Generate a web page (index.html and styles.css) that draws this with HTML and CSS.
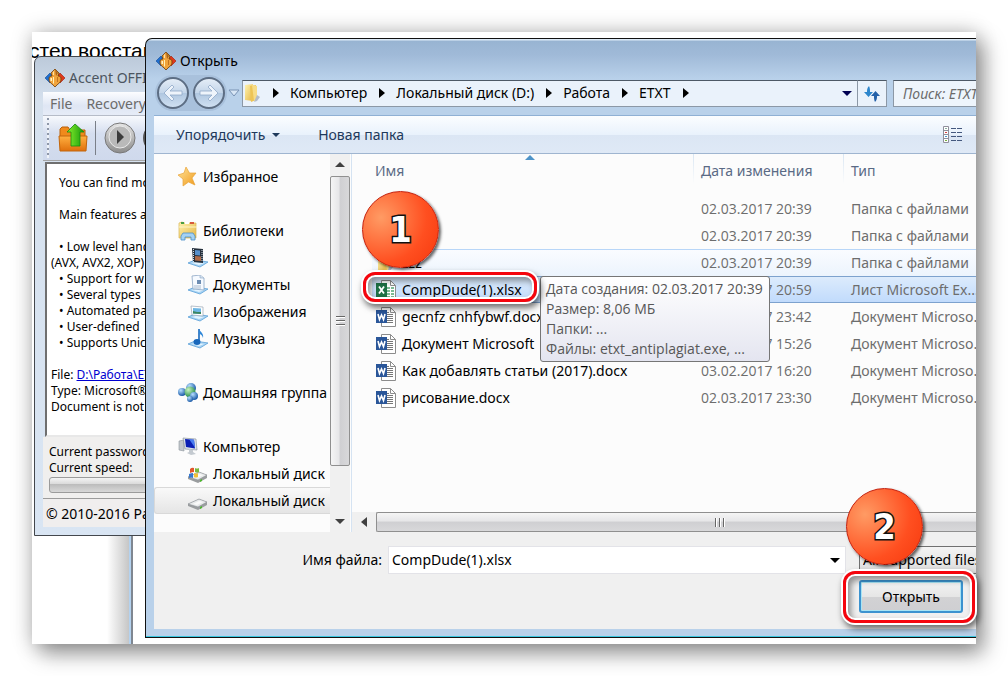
FILE: index.html
```html
<!DOCTYPE html>
<html lang="ru">
<head>
<meta charset="utf-8">
<title>Открыть</title>
<link rel="stylesheet" href="styles.css">
</head>
<body>
<svg class="sprite" aria-hidden="true">
  <defs>
    <linearGradient id="gold" x1="0" y1="0" x2="1" y2="1"><stop offset="0" stop-color="#fff3b0"/><stop offset="1" stop-color="#e5b645"/></linearGradient>
    <linearGradient id="orange" x1="0" y1="0" x2="0" y2="1"><stop offset="0" stop-color="#ffb040"/><stop offset="1" stop-color="#e0700c"/></linearGradient>
    <linearGradient id="green" x1="0" y1="0" x2="1" y2="0"><stop offset="0" stop-color="#8af02c"/><stop offset="1" stop-color="#159a0c"/></linearGradient>
    <linearGradient id="steel" x1="0" y1="0" x2="0" y2="1"><stop offset="0" stop-color="#e6e6e6"/><stop offset="1" stop-color="#8c8c8c"/></linearGradient>
    <linearGradient id="starfill" x1="0" y1="0" x2="1" y2="1"><stop offset="0" stop-color="#ffe49a"/><stop offset="1" stop-color="#f09a1c"/></linearGradient>
    <radialGradient id="globe" cx=".35" cy=".3" r=".7"><stop offset="0" stop-color="#b8e0ff"/><stop offset="1" stop-color="#1c5ba8"/></radialGradient>
    <radialGradient id="globe2" cx=".35" cy=".3" r=".7"><stop offset="0" stop-color="#c8f5c0"/><stop offset="1" stop-color="#238a4a"/></radialGradient>
    <symbol id="app" viewBox="0 0 20 20">
      <path d="M5 5 0 10l5 5 4-5z" fill="#1f6fd0" stroke="#124a94" stroke-width=".6"/><path d="M15 5l5 5-5 5-4-5z" fill="#e03a1c" stroke="#9c1c0c" stroke-width=".6"/>
      <path d="M10 1l4 4-1 3c2 0 3 1 3 3s-1 4-3 5l-3 3-3-3c-2-1-3-3-3-5s1-3 3-3L6 5z" fill="#f0a43c" stroke="#6e3c08" stroke-width=".8"/>
      <path d="M10 1l3 4-2 3z" fill="#a8641c"/><path d="M8 4l1-1v4l-1 0z" fill="#fbe0a8"/><path d="M8 9h1v7l-1-1z" fill="#fff0b8"/><path d="M5.500 10h1.500v3H5.500z" fill="#fff2c4"/><path d="M12 9h1v5h-1z" fill="#c27420"/>
    </symbol>
    <symbol id="folder" viewBox="0 0 20 20">
      <path d="M2 2l8-1v17l-8-1z" fill="url(#gold)"/><path d="M7 3l6-1v15l-5 2z" fill="#edc455"/><path d="M9 2l5 1v13l-3 2z" fill="#f7dc86"/><path d="M14 12l3 2-3 4-3 1z" fill="#b3bcc9"/>
    </symbol>
    <symbol id="star" viewBox="0 0 20 20"><path d="M8 0l3.500 6 6.500 0-4 5 3 7-6.500-3L5 19l0-7-5-4 6-2z" fill="url(#starfill)" stroke="#e8a53a" stroke-width=".7"/></symbol>
    <symbol id="library" viewBox="0 0 20 20">
      <path d="M1 4V2l3-1 2 1h12v15H1z" fill="url(#gold)" stroke="#d8b455" stroke-width=".7"/><path d="M3 1h3v2H3z" fill="#4a9e42"/><path d="M7 1h4v2H7z" fill="#fff"/><path d="M12 1h4v2h-4z" fill="#d65a3c"/>
      <path d="M1 6h18" stroke="#fff5c8"/><path d="M3 19v-4l2-3h10l2 3v4h-4v-3H7v3z" fill="#a5d2f4" stroke="#4b8fc8" stroke-width=".8"/>
    </symbol>
    <symbol id="tray" viewBox="0 0 20 20"><path d="M0 15l7-3 13 2-8 5z" fill="#a8d4f4" stroke="#5aa0d8" stroke-width=".8"/><path d="M4 15l4-1 8 1-5 2z" fill="#e4f4ff"/></symbol>
    <symbol id="video" viewBox="0 0 20 20"><use href="#tray"/><path d="M4 0l11 1v14L5 14z" fill="#26303c"/><path d="M7 2l5 .5v5L7 7z" fill="#5790cc"/><path d="M7 8l6 .5V13l-6-.5z" fill="#b06a48"/><path d="M5.500 1v13M14 2v12" stroke="#d4dce4" stroke-width="1" stroke-dasharray="1 1"/></symbol>
    <symbol id="docs" viewBox="0 0 20 20"><use href="#tray"/><path d="M4 1l8-1 4 3v12l-11-1z" fill="#f6faff" stroke="#8ca6c4" stroke-width=".8"/><path d="M12 0v3h4" fill="#d5e2f0" stroke="#8ca6c4" stroke-width=".6"/><path d="M9 5h4v4H9z" fill="#6c8cb2"/><path d="M6 11h7M6 13h7" stroke="#a9bbd0"/></symbol>
    <symbol id="pics" viewBox="0 0 20 20"><use href="#tray"/><path d="M3 4l12 1v9L4 13z" fill="#fff" stroke="#99a6b5" stroke-width=".7"/><path d="M5 6l8 .5V12l-8-.5z" fill="#6db6e4"/><path d="M5 9l4 1 4 0v2l-8-.5z" fill="#3b8560"/></symbol>
    <symbol id="music" viewBox="0 0 20 20"><use href="#tray"/><path d="M11 0v12" stroke="#1767bb" stroke-width="1.600"/><path d="M11 0c1 3 5 4 4 9-1-3-2-4-4-4z" fill="#2f87d8"/><ellipse cx="9" cy="13" rx="3.500" ry="3" fill="#1767bb"/></symbol>
    <symbol id="home" viewBox="0 0 20 20"><circle cx="4" cy="9" r="4" fill="url(#globe)"/><circle cx="13" cy="5" r="5" fill="url(#globe)"/><circle cx="12" cy="9" r="5.500" fill="url(#globe2)"/><circle cx="16" cy="13" r="4" fill="url(#globe)"/><circle cx="12" cy="16" r="3" fill="url(#globe)"/></symbol>
    <symbol id="pc" viewBox="0 0 20 20"><path d="M1 4l5-1v11l-5-1z" fill="#c4c8cc" stroke="#8c949c" stroke-width=".6"/><path d="M5 1l13 1 1 11L7 12z" fill="#dde3ea" stroke="#7e8893" stroke-width=".6"/><path d="M7 2l9 .8 1 8.700L8 10z" fill="#0b1fb4"/><path d="M11 2l5 .8 1 8z" fill="#4a7df0"/><path d="M11 12l4 1v2l3 2-5 1-4-2 2-1z" fill="#c4cad0"/></symbol>
    <symbol id="drive" viewBox="0 0 20 20"><path d="M0 13l11-5 8 3v3l-9 5-10-4z" fill="#9a9d9f"/><path d="M0 13l11-5 8 3-9 5z" fill="#e8eaeb" stroke="#8a8f94" stroke-width=".6"/><path d="M5 13l6-3 4 1-6 3z" fill="#fafafa"/><path d="M12 16l2-1v2l-2 1z" fill="#4cb82c"/></symbol>
    <symbol id="sysdrive" viewBox="0 0 20 20"><use href="#drive"/><path d="M2 5q2-2 4-1v4q-2 0-4 1z" fill="#e2572c"/><path d="M7 4q2 1 4 0v4q-2 1-4 0z" fill="#7bb83c"/><path d="M1 10q2-1 4-1v5q-2-1-4 0z" fill="#3878cc"/><path d="M6 9q2 1 4 0v4q-2 1-4 0z" fill="#f0c038"/></symbol>
    <symbol id="word" viewBox="0 0 20 20"><path d="M5.500 .5h9l5 5v14h-14z" fill="#fff" stroke="#8c8c8c" stroke-width="1"/><path d="M14.500 .5v5h5" fill="none" stroke="#8c8c8c"/><path d="M11 7.500h6M11 9.500h6M11 11.500h6M11 13.500h6M11 15.500h6M11 5.500h2" stroke="#777"/><path d="M0 3h11v13H0z" fill="#2a5699"/><path d="M2 7l1.500 5.500L5.500 8l2 4.500L9 7" fill="none" stroke="#fff" stroke-width="1.600"/></symbol>
    <symbol id="excel" viewBox="0 0 20 20"><path d="M5.500 .5h9l5 5v14h-14z" fill="#fff" stroke="#8c8c8c"/><path d="M14.500 .5v5h5" fill="none" stroke="#8c8c8c"/><path d="M11 7h3v2h-3zM15 7h3v2h-3zM11 10h3v2h-3zM15 10h3v2h-3zM11 13h3v2h-3zM15 13h3v2h-3zM11 16h3v2h-3zM15 16h3v2h-3z" fill="#7cba94"/><path d="M0 3h11v14H0z" fill="#1e7145"/><path d="M3 6.500l5 7M8 6.500l-5 7" stroke="#fff" stroke-width="1.800"/></symbol>
  </defs>
</svg>

<main class="desktop">
  <p class="backdrop-title">стер восстан</p>
  <div class="backdrop-panel"></div>

  <section class="app-window" aria-label="Accent OFFICE">
    <header class="app-title"><svg class="icon"><use href="#app"/></svg>Accent OFFICE</header>
    <nav class="app-menu"><button type="button">File</button><button type="button">Recovery</button></nav>
    <div class="app-tools">
      <span class="grip"></span>
      <button type="button" aria-label="Open">
        <svg class="tool-icon" viewBox="0 0 32 32"><path d="M3 7l2-2h6l2 3h15v8H3z" fill="#f08a1c" stroke="#b8600c"/><path d="M2 14h28l-1 15H3z" fill="url(#orange)" stroke="#c2660c"/><path d="M18 2l9 8h-4v14h-9V10h-4z" fill="url(#green)" stroke="#178a10" stroke-width=".8"/></svg>
      </button>
      <span class="tool-line"></span>
      <button type="button" aria-label="Start">
        <svg class="tool-icon" viewBox="0 0 32 32"><circle cx="16" cy="16" r="15" fill="url(#steel)" stroke="#777" stroke-width="1"/><circle cx="16" cy="15" r="11" fill="#b9b9b9" stroke="#e8e8e8"/><path d="M13 8l7 7-7 7z" fill="#3c3c3c"/></svg>
      </button>
      <button type="button" aria-label="Stop">
        <svg class="tool-icon" viewBox="0 0 32 32"><circle cx="16" cy="16" r="15" fill="url(#steel)" stroke="#555" stroke-width="2"/></svg>
      </button>
    </div>
    <div class="app-log">
      <p class="indent">You can find more</p>
      <p class="indent gap">Main features are</p>
      <ul>
        <li>• Low level hand</li>
        <li class="wrapped">(AVX, AVX2, XOP)</li>
        <li>• Support for w</li>
        <li>• Several types</li>
        <li>• Automated pas</li>
        <li>• User-defined</li>
        <li>• Supports Unic</li>
      </ul>
      <p class="gap">File: <a href="#file">D:\Работа\ETXT</a></p>
      <p>Type: Microsoft®</p>
      <p>Document is not</p>
    </div>
    <div class="app-progress">
      <p>Current password:</p>
      <p>Current speed:</p>
      <div class="bar"></div>
    </div>
    <footer class="app-status">© 2010-2016 Pass</footer>
  </section>

  <section class="dialog" role="dialog" aria-labelledby="dialog-title">
    <header class="dialog-title"><svg class="icon"><use href="#app"/></svg><span id="dialog-title">Открыть</span></header>

    <div class="nav-row">
      <div class="history">
        <button type="button" class="round" aria-label="Назад"><svg viewBox="0 0 20 20"><path d="M9 2 1 10l8 8 2-2-4-4h12V8H7l4-4z" fill="#eef4fb" stroke="#8fa8c8" stroke-width=".8"/></svg></button>
        <button type="button" class="round" aria-label="Вперёд"><svg viewBox="0 0 20 20"><path d="M11 2l8 8-8 8-2-2 4-4H1V8h12L9 4z" fill="#eef4fb" stroke="#8fa8c8" stroke-width=".8"/></svg></button>
      </div>
      <button type="button" class="recent" aria-label="Недавние"><svg viewBox="0 0 12 8"><path d="M1 1h10L6 7z" fill="#d8e6f5" stroke="#7892b4"/></svg></button>
      <div class="address">
        <svg class="icon"><use href="#folder"/></svg>
        <span class="arrow"></span><button type="button">Компьютер</button>
        <span class="arrow"></span><button type="button">Локальный диск (D:)</button>
        <span class="arrow"></span><button type="button">Работа</button>
        <span class="arrow"></span><button type="button">ETXT</button>
        <span class="arrow"></span>
        <span class="drop"></span>
      </div>
      <button type="button" class="refresh" aria-label="Обновить"><svg viewBox="0 0 18 18"><path d="M6 1C4 3 4 5 4 7H1l4.500 5L10 7H7c0-2 0-4-1-6z" fill="#2d86cc"/><path d="M12 17c2-2 2-4 2-6h3l-4.500-5L8 11h3c0 2 0 4 1 6z" fill="#2460a8"/></svg></button>
      <input class="search" type="text" placeholder="Поиск: ETXT" aria-label="Поиск">
    </div>

    <div class="command-bar">
      <button type="button">Упорядочить <span class="caret"></span></button>
      <button type="button">Новая папка</button>
      <button type="button" class="view" aria-label="Вид"><svg viewBox="0 0 20 18"><path d="M1.500 .5h5v16h-5zM1.500 4.500h5M1.500 8.500h5M1.500 12.500h5" fill="#fff" stroke="#8f8f9c"/><path d="M3 2.500h2" stroke="#8ab0a0"/><path d="M3 6.500h2" stroke="#d84040"/><path d="M3 10.500h2" stroke="#4898d0"/><path d="M3 14.500h2" stroke="#78b040"/><path d="M9 2.500h5M15 2.500h5M9 6.500h5M15 6.500h5M9 10.500h5M15 10.500h5M9 14.500h5M15 14.500h5" stroke="#44587e"/></svg></button>
    </div>

    <div class="dialog-body">
      <nav class="tree">
        <a href="#fav" class="group"><svg class="icon"><use href="#star"/></svg>Избранное</a>
        <a href="#lib" class="group"><svg class="icon"><use href="#library"/></svg>Библиотеки</a>
        <a href="#video-lib"><svg class="icon"><use href="#video"/></svg>Видео</a>
        <a href="#docs-lib"><svg class="icon"><use href="#docs"/></svg>Документы</a>
        <a href="#pics-lib"><svg class="icon"><use href="#pics"/></svg>Изображения</a>
        <a href="#music-lib"><svg class="icon"><use href="#music"/></svg>Музыка</a>
        <a href="#homegroup" class="group"><svg class="icon"><use href="#home"/></svg>Домашняя группа</a>
        <a href="#computer" class="group"><svg class="icon"><use href="#pc"/></svg>Компьютер</a>
        <a href="#disk-c"><svg class="icon"><use href="#sysdrive"/></svg>Локальный диск</a>
        <a href="#disk-d" class="current"><svg class="icon"><use href="#drive"/></svg>Локальный диск</a>
      </nav>
      <div class="vscroll" aria-hidden="true"><span class="tri up"></span><span class="thumb"><i class="ridges"></i></span><span class="tri down"></span></div>
      <div class="files">
        <table>
          <thead><tr><th scope="col" class="name sorted">Имя</th><th scope="col" class="date">Дата изменения</th><th scope="col">Тип</th></tr></thead>
          <tbody>
            <tr><td></td><td>02.03.2017 20:39</td><td>Папка с файлами</td></tr>
            <tr><td></td><td>02.03.2017 20:39</td><td>Папка с файлами</td></tr>
            <tr class="hover"><td><span class="file"><svg class="icon"><use href="#folder"/></svg>zzz</span></td><td>02.03.2017 20:39</td><td>Папка с файлами</td></tr>
            <tr class="selected"><td><span class="file"><svg class="icon"><use href="#excel"/></svg>CompDude(1).xlsx</span></td><td>02.03.2017 20:59</td><td>Лист Microsoft Ex...</td></tr>
            <tr><td><span class="file"><svg class="icon"><use href="#word"/></svg>gecnfz cnhfybwf.docx</span></td><td>02.03.2017 23:42</td><td>Документ Microso...</td></tr>
            <tr><td><span class="file"><svg class="icon"><use href="#word"/></svg>Документ Microsoft</span></td><td>02.03.2017 15:26</td><td>Документ Microso...</td></tr>
            <tr><td><span class="file"><svg class="icon"><use href="#word"/></svg>Как добавлять статьи (2017).docx</span></td><td>03.02.2017 16:20</td><td>Документ Microso...</td></tr>
            <tr><td><span class="file"><svg class="icon"><use href="#word"/></svg>рисование.docx</span></td><td>02.03.2017 23:30</td><td>Документ Microso...</td></tr>
          </tbody>
        </table>
        <div class="hscroll" aria-hidden="true"><span class="tri left"></span><span class="thumb"><i class="ridges"></i></span></div>
        <div class="tooltip" role="tooltip">Дата создания: 02.03.2017 20:39<br>Размер: 8,06 МБ<br>Папки: ...<br>Файлы: etxt_antiplagiat.exe, ...</div>
      </div>
    </div>

    <form class="dialog-form">
      <label for="filename">Имя файла:</label>
      <div class="combo"><input id="filename" type="text" value="CompDude(1).xlsx"><span class="drop"></span></div>
      <select aria-label="Тип файлов"><option>All supported files</option></select>
      <button type="button" class="open">Открыть</button>
    </form>
  </section>

  <div class="frame frame-file"></div>
  <div class="frame frame-open"></div>
  <div class="marker marker-one"><span>1</span></div>
  <div class="marker marker-two"><span>2</span></div>
</main>
</body>
</html>
```
FILE: styles.css
```css
* { box-sizing: border-box; }

body {
  margin: 0;
  padding: 32px;
  min-height: 100vh;
  display: grid;
  overflow: hidden;
  background: #fff;
  color: #000;
  font: 14px/20px "Noto Sans", "Open Sans", sans-serif;
}

p, ul { margin: 0; padding: 0; list-style: none; }
button, input, select { font: inherit; color: inherit; margin: 0; }
button { padding: 0; border: 0; background: none; }
a { color: inherit; text-decoration: none; }
.sprite { position: absolute; width: 0; height: 0; }
.icon { width: 20px; height: 20px; flex: none; }

.desktop {
  position: relative;
  background: #fff;
  box-shadow: 0 0 20px rgba(0, 0, 0, .24), 8px 10px 20px rgba(0, 0, 0, .36);
}

.backdrop-title {
  position: absolute;
  left: 0;
  top: 7px;
  width: 116px;
  overflow: hidden;
  white-space: nowrap;
  text-indent: -3px;
  font: 21px/24px "Liberation Sans", Arial, sans-serif;
}

.backdrop-panel {
  position: absolute;
  left: 0;
  top: 500px;
  bottom: 0;
  width: 101px;
  border-right: 2px solid #7f8791;
  background: linear-gradient(to left, #b4d2ef 2px, #c6c6c6 2px, #fff 24px);
}

/* Password recovery application behind the dialog */
.app-window {
  position: absolute;
  left: 2px;
  top: 24px;
  width: 200px;
  height: 480px;
  padding: 0 0 8px 8px;
  display: flex;
  flex-direction: column;
  overflow: hidden;
  white-space: nowrap;
  border: 1px solid #43474d;
  border-radius: 7px 0 0 0;
  background: linear-gradient(#bccada, #d6e1ee 44px, #d9e5f3);
  font: 12px/16px "Noto Sans", sans-serif;
}
.app-title {
  height: 35px;
  padding: 7px 2px 0;
  display: flex;
  gap: 4px;
  align-items: center;
  color: #4c5560;
  font: 14px/20px "Noto Sans", sans-serif;
}
.app-menu {
  height: 24px;
  padding-left: 7px;
  display: flex;
  gap: 14px;
  color: #6b6b6b;
  font: 14px/24px "Noto Sans", sans-serif;
  background: linear-gradient(#fcfdff, #dfe6f4 60%, #e6ecf7);
  border-bottom: 1px solid #b6bcc8;
}
.app-tools {
  height: 45px;
  padding-left: 4px;
  display: flex;
  align-items: center;
  border-bottom: 1px solid #a5a5a5;
  background: linear-gradient(#f7f9fd, #d5deef 40%, #cfd9ec);
}
.app-tools button { height: 32px; }
.grip { width: 2px; height: 40px; margin-right: 8px; background: repeating-linear-gradient(#8e97a8 0 2px, #eef2f8 2px 5px); }
.tool-icon { width: 32px; height: 32px; display: block; }
.tool-line { width: 1px; height: 34px; margin: 0 8px 0 6px; background: #7a7f88; }
.app-tools button + button { margin-left: 7px; }
.app-log {
  flex: 1;
  margin: 1px 0 0 2px;
  padding: 11px 4px 9px;
  background: #fff;
  border: 2px solid #6f6f6f;
  border-right: 0;
  border-bottom-color: #e8e8e8;
}
.app-log .indent, .app-log li { padding-left: 8px; }
.app-log .wrapped { padding-left: 0; }
.app-log .gap { padding-top: 16px; }
.app-log ul { padding-top: 16px; }
.app-log a { color: #0000d0; text-decoration: underline; }
.app-progress { height: 62px; padding: 7px 0 0 6px; background: #f0efee; border-bottom: 1px solid #9b9b9b; }
.bar { height: 16px; margin-top: 1px; border: 1px solid #9b9b9b; border-radius: 3px; background: linear-gradient(#f4f4f4, #dcdcdc 40%, #bcbcbc 45%, #d8d8d8); }
.app-status { height: 28px; padding-left: 3px; font: 14px/30px "Noto Sans", sans-serif; background: #f0eeee; }

/* Open file dialog */
.dialog {
  position: absolute;
  left: 113px;
  top: 6px;
  right: 0;
  padding: 0 0 8px 8px;
  overflow: hidden;
  white-space: nowrap;
  border: 1px solid #111;
  border-right: 0;
  border-radius: 7px 0 0 0;
  background: linear-gradient(#dceaf7 0 1px, #98b4d2 2px, #a0bad8 16px, #b9d1ea 40px, #b9d1ea);
  box-shadow: inset 0 -1px #39c6df;
}
.dialog-title { height: 40px; padding: 3px 0 0 2px; display: flex; gap: 4px; align-items: center; }
.nav-row { height: 36px; padding: 1px 0 9px 3px; display: flex; align-items: center; }
.nav-row > * { flex: none; }
.history { display: flex; gap: 4px; margin-right: 3px; border-radius: 17px; background: #a9c1dc; box-shadow: 0 0 0 2px #a9c1dc; }
.round { width: 32px; height: 32px; padding: 4px; border: 2px solid #5d6e84; border-radius: 50%; background: linear-gradient(#e4edf7, #c3d5e9 50%, #b0c7e0 51%, #cfe0f2); }
.round svg { display: block; width: 20px; height: 20px; }
.recent { width: 12px; margin-right: 2px; }
.recent svg { display: block; width: 12px; height: 8px; }
.address { height: 27px; width: 616px; padding: 0 5px 0 0; display: flex; align-items: center; border: 1px solid #8c98a6; border-top-color: #4d5966; background: #eaf2fb; }
.address .arrow { margin: 0 11px 0 12px; border: 5px solid transparent; border-left: 6px solid #000; border-right: 0; }
.address .icon + .arrow { margin-left: 10px; }
.drop { margin-left: auto; border: 5px solid transparent; border-top: 5px solid #000052; border-bottom: 0; }
.refresh { width: 29px; height: 27px; padding: 4px 5px; border: 1px solid #8c98a6; border-top-color: #4d5966; border-left: 0; background: #eaf2fb; }
.refresh svg { display: block; width: 18px; height: 18px; }
.search { width: 160px; height: 27px; margin-left: 6px; padding: 0 9px; border: 1px solid #8c98a6; border-top-color: #4d5966; background: #eef5fc; font-style: italic; }
.search::placeholder { color: #6b6b6b; opacity: 1; }

.command-bar {
  height: 39px;
  padding: 0 14px 0 22px;
  display: flex;
  align-items: center;
  gap: 38px;
  color: #1e395b;
  border-top: 1px solid #8fb0d4;
  border-bottom: 1px solid #9fb5d0;
  background: linear-gradient(#fbfdff, #e9f2fc 50%, #dbe6f4 51%, #dfe9f6);
}
.caret { display: inline-block; margin-left: 3px; vertical-align: 3px; border: 4px solid transparent; border-top: 4px solid #1e395b; border-bottom: 0; }
.command-bar .view { margin-left: auto; width: 20px; }
.view svg { display: block; width: 20px; height: 18px; }

.dialog-body { height: 378px; display: flex; background: #fcfcfc; }
.tree { width: 176px; padding-top: 9px; overflow: hidden; }
.tree a { height: 27px; padding-left: 34px; display: flex; gap: 5px; align-items: center; }
.tree .group { padding-left: 24px; }
.tree .group + .group, .tree a + .group { margin-top: 27px; }
.tree .current { border: 1px solid #d9d9d9; border-right: 0; padding-left: 33px; border-radius: 3px 0 0 3px; background: linear-gradient(#f9f9f9, #e5e5e5); }

.vscroll { width: 20px; padding: 8px 0; display: flex; flex-direction: column; align-items: center; background: #f0f0f0; }
.tri { border: 5px solid transparent; }
.tri.up { border-bottom-color: #404040; border-top: 0; }
.tri.down { border-top-color: #404040; border-bottom: 0; }
.tri.left { border-right: 6px solid #404040; border-left: 0; }
.vscroll .thumb { height: 290px; width: 20px; margin: 9px 0 auto; border: 1px solid #8f8f8f; border-radius: 2px; background: linear-gradient(90deg, #f5f5f5, #e6e6e8 45%, #cfcfd2 50%, #d8d8da); display: grid; place-items: center; }
.vscroll .ridges { width: 9px; height: 11px; background: repeating-linear-gradient(#666 0 1px, #fff 1px 2px, transparent 2px 4px); }

.files { position: relative; flex: 1; min-width: 0; margin-left: 1px; border-left: 1px solid #d5e3f2; display: flex; flex-direction: column; }
table { width: 680px; margin-left: 20px; table-layout: fixed; border-collapse: separate; border-spacing: 0; color: #6d6d6d; }
th { height: 41px; padding: 0 0 7px 8px; text-align: left; font-weight: 400; color: #5a6a85; background: linear-gradient(#d9e6f3, #fcfcfc 30px) left / 1px 100% no-repeat; }
th.name { width: 321px; padding-left: 3px; background: none; }
th.date { width: 150px; }
.sorted::after { content: ""; position: absolute; left: 173px; top: 1px; border: 5px solid transparent; border-top: 0; border-bottom-color: #4f94c8; }
td { height: 27px; padding: 0 0 0 8px; overflow: hidden; }
td:nth-child(2) { font-family: "Open Sans", sans-serif; }
td:first-child { padding-left: 4px; color: #000; }
.file { display: flex; gap: 6px; align-items: center; }
.hover td { border-top: 1px solid #b8d6f8; background: linear-gradient(#fafcff, #ecf4fd); }
.selected td { border: solid #7da2ce; border-width: 1px 0; background: linear-gradient(#dcebfc, #c1dbfc); }

.hscroll { height: 20px; margin-top: auto; display: flex; align-items: center; padding-left: 9px; background: #f0f0f0; }
.hscroll .thumb { flex: 1; height: 20px; margin-left: 9px; border: 1px solid #8f8f8f; border-right: 0; border-radius: 2px 0 0 2px; background: linear-gradient(#f5f5f5, #e6e6e8 45%, #cfcfd2 50%, #d8d8da); display: flex; align-items: center; justify-content: center; }
.hscroll .ridges { width: 11px; height: 9px; margin-left: 88px; background: repeating-linear-gradient(90deg, #666 0 1px, #fff 1px 2px, transparent 2px 4px); }

.tooltip { position: absolute; left: 188px; top: 122px; width: 230px; padding: 2px 5px; color: #575757; border: 1px solid #767676; border-radius: 3px; background: linear-gradient(#fff, #e4e5f0); font-family: "Open Sans", sans-serif; }

.dialog-form {
  height: 97px;
  padding: 14px 0 0;
  display: grid;
  grid-template-columns: 228px 1fr 117px;
  grid-template-rows: 28px 33px;
  row-gap: 6px;
  background: #f0f0f0;
}
.dialog-form label { text-align: right; line-height: 28px; }
.combo { margin: 0 13px 0 6px; padding: 0 5px 0 3px; display: flex; align-items: center; background: #fff; border: 1px solid #e3e3e8; }
.combo input { flex: 1; min-width: 0; padding: 0; border: 0; background: none; outline: 0; }
.combo .drop { border-top-color: #000; }
select { width: 160px; padding: 0 0 0 3px; appearance: none; border: 1px solid #707070; border-radius: 0; background: linear-gradient(#f4f4f4, #dcdcdc); }
.open { grid-column: 3; width: 104px; border: 2px solid #3c93cf; border-radius: 3px; background: linear-gradient(#f2f2f2, #e6e6e6 50%, #d2d2d4 51%, #cfcfd2); box-shadow: inset 0 0 0 1px #a8e4f4; }

/* Step annotations */
.frame { position: absolute; border: 3px solid #f5050d; border-radius: 12px; box-shadow: 0 0 0 2px #fff, inset 0 0 0 2px #fff, 2px 4px 6px 2px rgba(0, 0, 0, .55), inset 3px 4px 6px 2px rgba(0, 0, 0, .4); }
.frame-file { left: 331px; top: 240px; width: 174px; height: 30px; }
.frame-open { right: 1px; top: 539px; width: 132px; height: 52px; }
.marker {
  position: absolute;
  width: 77px;
  height: 77px;
  display: grid;
  place-items: center;
  border: 1px solid #c5200c;
  border-radius: 50%;
  color: #fff;
  background: radial-gradient(circle at 24% 34%, #ff9b64, #ff4f20 60%, #f5370c);
  box-shadow: 2px 2px 3px rgba(0, 0, 0, .6);
  font: bold 36px/40px "DejaVu Sans Condensed", "DejaVu Sans", sans-serif;
  -webkit-text-stroke: 3px #111;
  paint-order: stroke fill;
}
.marker-one { left: 330px; top: 159px; }
.marker-two { right: 53px; top: 456px; }
```
